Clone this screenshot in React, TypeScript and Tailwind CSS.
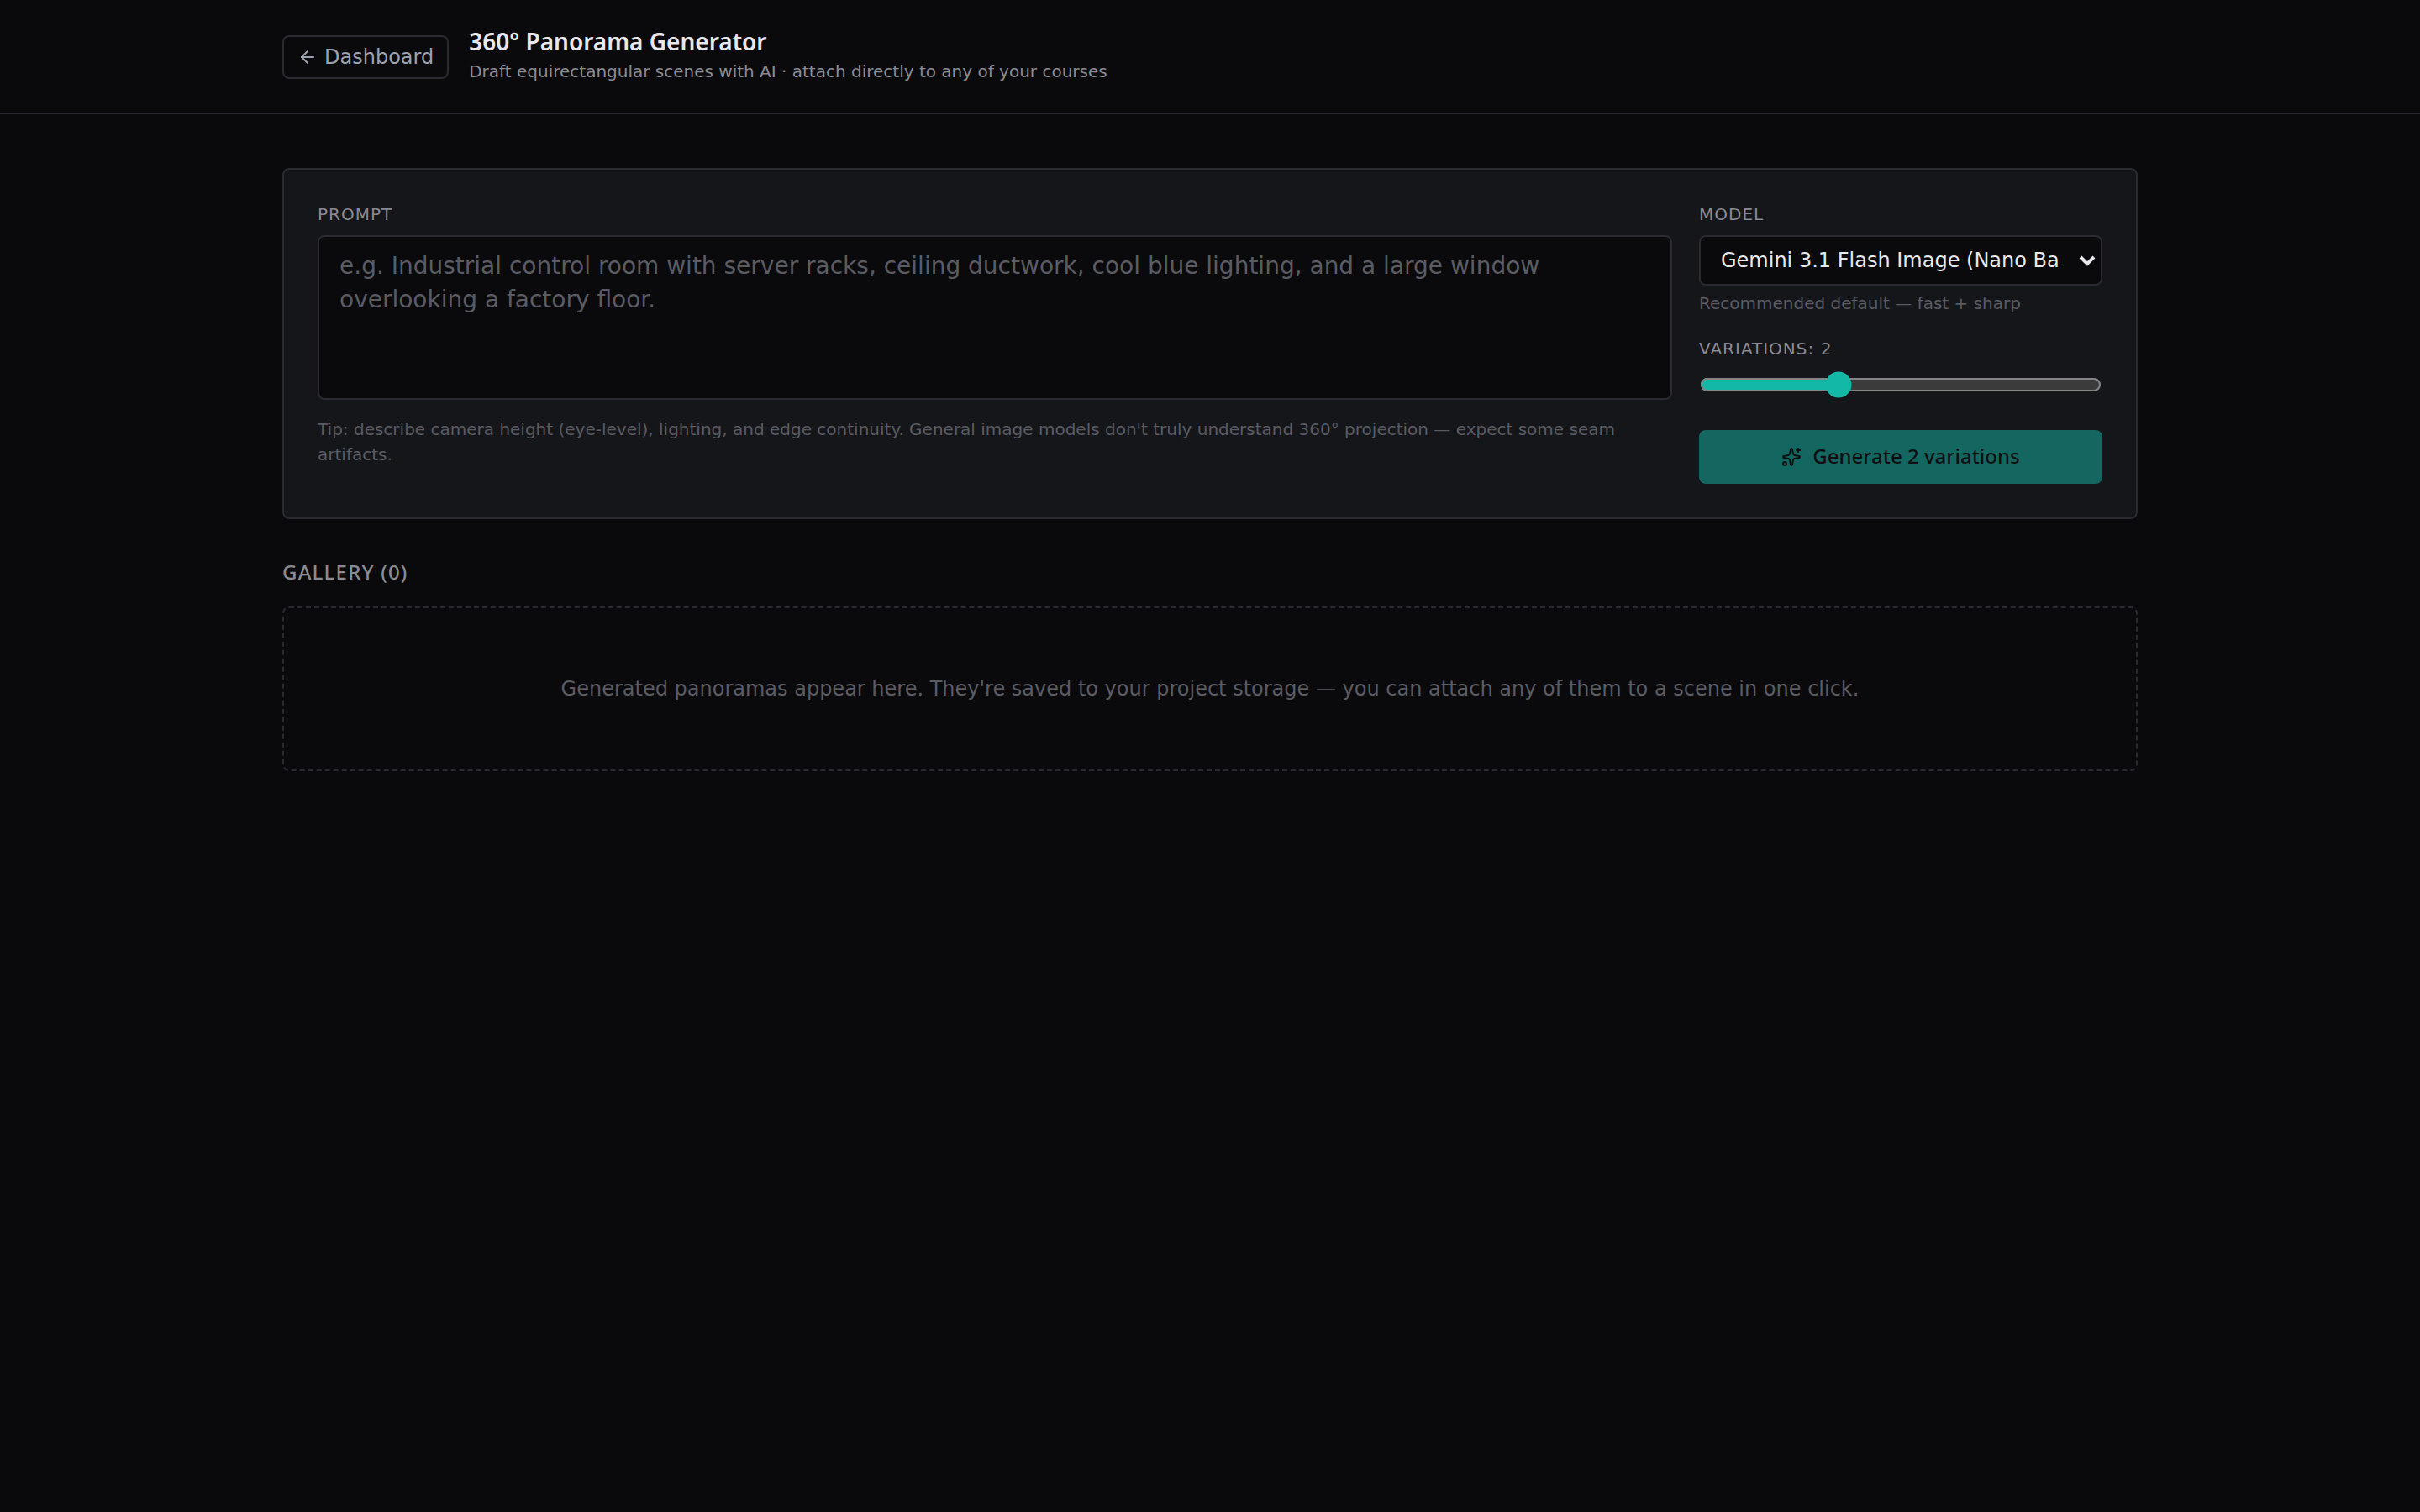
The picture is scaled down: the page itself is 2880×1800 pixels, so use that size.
import { useState } from 'react';
import { ArrowLeft, Sparkles } from 'lucide-react';

const MODELS = [
  {
    id: 'gemini-3.1-flash-image',
    label: 'Gemini 3.1 Flash Image (Nano Banana 2)',
    hint: 'Recommended default — fast + sharp',
  },
  {
    id: 'gemini-3-pro-image',
    label: 'Gemini 3 Pro Image (Nano Banana Pro)',
    hint: 'Highest quality — slower',
  },
];

const labelClass = 'block text-[10px] leading-[13px] tracking-wider text-[#8a8a92] uppercase';

export default function App() {
  const [prompt, setPrompt] = useState('');
  const [modelId, setModelId] = useState(MODELS[0].id);
  const [count, setCount] = useState(2);

  const model = MODELS.find((m) => m.id === modelId) ?? MODELS[0];

  return (
    <div className="min-h-[900px] bg-[#0a0a0c] font-['DejaVu_Sans',sans-serif] text-[#e8e8ec] scheme-dark [zoom:2]">
      <header className="border-b border-[#2a2a30]">
        <div className="mx-auto flex h-[67px] max-w-6xl items-center gap-3 px-6">
          <button className="mt-px flex items-center gap-1 rounded border border-[#2a2a30] px-2 py-1 text-xs text-[#9ca3af]">
            <ArrowLeft className="h-3 w-3" />
            Dashboard
          </button>
          <div className="mb-0.5">
            <h1 className="mb-px font-['Noto_Sans',sans-serif] text-sm leading-[19px] font-semibold">
              360° Panorama Generator
            </h1>
            <p className="text-[10px] leading-[15px] text-[#8a8a92]">
              Draft equirectangular scenes with AI · attach directly to any of your courses
            </p>
          </div>
        </div>
      </header>

      <main className="mx-auto max-w-6xl px-6 py-8">
        <section className="grid grid-cols-[1fr_240px] gap-4 rounded border border-[#2a2a30] bg-[#15161a] p-5">
          <div>
            <label className={labelClass}>Prompt</label>
            <textarea
              rows={4}
              value={prompt}
              onChange={(e) => setPrompt(e.target.value)}
              placeholder="e.g. Industrial control room with server racks, ceiling ductwork, cool blue lighting, and a large window overlooking a factory floor."
              className="mt-1.5 block w-full resize-none rounded border border-[#2a2a30] bg-[#0a0a0c] px-3 pt-[7.5px] pb-[8.5px] text-sm placeholder:text-[#5a5b63]"
            />
            <p className="mt-2.5 text-[10px] leading-[15px] text-[#5a5b63]">
              Tip: describe camera height (eye-level), lighting, and edge continuity. General image models don't truly
              understand 360° projection — expect some seam artifacts.
            </p>
          </div>

          <div>
            <label className={labelClass}>Model</label>
            <div className="relative mt-1.5">
              <select
                value={modelId}
                onChange={(e) => setModelId(e.target.value)}
                className="block h-[30px] w-full appearance-none rounded border border-[#2a2a30] bg-[#0a0a0c] pr-[25px] pl-3 text-xs"
              >
                {MODELS.map((m) => (
                  <option key={m.id} value={m.id}>
                    {m.label}
                  </option>
                ))}
              </select>
              <svg
                viewBox="0 0 10 7"
                className="pointer-events-none absolute top-3 right-1 h-[7px] w-2.5"
                fill="none"
                stroke="currentColor"
                strokeWidth={2}
              >
                <path d="M1 1l4 4 4-4" />
              </svg>
            </div>
            <p className="mt-[3px] text-[10px] leading-[15px] text-[#5a5b63]">{model.hint}</p>

            <label className={`${labelClass} mt-[13px]`}>Variations: {count}</label>
            <input
              type="range"
              min={1}
              max={4}
              value={count}
              onChange={(e) => setCount(Number(e.target.value))}
              className="mx-auto mt-[7px] block w-[239px] accent-[#14b8a6]"
            />

            <button
              disabled={!prompt.trim()}
              className="mt-[19px] flex h-8 w-full items-center justify-center gap-[6.5px] rounded bg-[#14b8a6] font-['Noto_Sans',sans-serif] text-xs font-medium text-[#0a0a0c] disabled:opacity-50"
            >
              <Sparkles className="h-3 w-3" />
              <span className="pb-px">Generate {count} variations</span>
            </button>
          </div>
        </section>

        <h2 className="mt-6 font-['Noto_Sans',sans-serif] text-xs leading-[15px] font-medium tracking-wider text-[#8a8a92] uppercase">
          Gallery (0)
        </h2>
        <div className="mt-[13px] rounded border border-dashed border-[#2a2a30] py-10 text-center text-xs text-[#5a5b63]">
          Generated panoramas appear here. They're saved to your project storage — you can attach any of them to a scene
          in one click.
        </div>
      </main>
    </div>
  );
}
